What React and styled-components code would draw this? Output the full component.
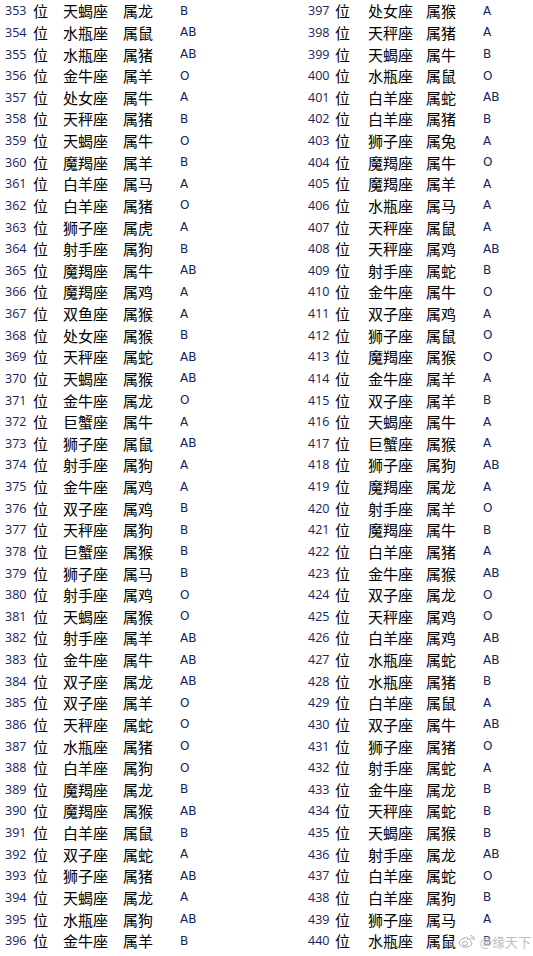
import React from "react";
import styled, { createGlobalStyle } from "styled-components";

const GlobalStyle = createGlobalStyle`
  html, body {
    margin: 0;
    padding: 0;
    background: #ffffff;
  }
`;

const LEFT = `353 天蝎座 龙 B
354 水瓶座 鼠 AB
355 水瓶座 猪 AB
356 金牛座 羊 O
357 处女座 牛 A
358 天秤座 猪 B
359 天蝎座 牛 O
360 魔羯座 羊 B
361 白羊座 马 A
362 白羊座 猪 O
363 狮子座 虎 A
364 射手座 狗 B
365 魔羯座 牛 AB
366 魔羯座 鸡 A
367 双鱼座 猴 A
368 处女座 猴 B
369 天秤座 蛇 AB
370 天蝎座 猴 AB
371 金牛座 龙 O
372 巨蟹座 牛 A
373 狮子座 鼠 AB
374 射手座 狗 A
375 金牛座 鸡 A
376 双子座 鸡 B
377 天秤座 狗 B
378 巨蟹座 猴 B
379 狮子座 马 B
380 射手座 鸡 O
381 天蝎座 猴 O
382 射手座 羊 AB
383 金牛座 牛 AB
384 双子座 龙 AB
385 双子座 羊 O
386 天秤座 蛇 O
387 水瓶座 猪 O
388 白羊座 狗 O
389 魔羯座 龙 B
390 魔羯座 猴 AB
391 白羊座 鼠 B
392 双子座 蛇 A
393 狮子座 猪 AB
394 天蝎座 龙 A
395 水瓶座 狗 AB
396 金牛座 羊 B`;

const RIGHT = `397 处女座 猴 A
398 天秤座 猪 A
399 天蝎座 牛 B
400 水瓶座 鼠 O
401 白羊座 蛇 AB
402 白羊座 猪 B
403 狮子座 兔 A
404 魔羯座 牛 O
405 魔羯座 羊 A
406 水瓶座 马 A
407 天秤座 鼠 A
408 天秤座 鸡 AB
409 射手座 蛇 B
410 金牛座 牛 O
411 双子座 鸡 A
412 狮子座 鼠 O
413 魔羯座 猴 O
414 金牛座 羊 A
415 双子座 羊 B
416 天蝎座 牛 A
417 巨蟹座 猴 A
418 狮子座 狗 AB
419 魔羯座 龙 A
420 射手座 羊 O
421 魔羯座 牛 B
422 白羊座 猪 A
423 金牛座 猴 AB
424 双子座 龙 O
425 天秤座 鸡 O
426 白羊座 鸡 AB
427 水瓶座 蛇 AB
428 水瓶座 猪 B
429 白羊座 鼠 A
430 双子座 牛 AB
431 狮子座 猪 O
432 射手座 蛇 A
433 金牛座 龙 B
434 天秤座 蛇 B
435 天蝎座 猴 B
436 射手座 龙 AB
437 白羊座 蛇 O
438 白羊座 狗 B
439 狮子座 马 A
440 水瓶座 鼠 B`;

const parse = (text) => text.split("\n").map((line) => line.split(" "));

const Page = styled.div`
  position: relative;
  width: 533px;
  height: 956px;
  display: grid;
  grid-template-columns: 302px 1fr;
  overflow: hidden;
  background: #ffffff;
`;

const Column = styled.div`
  padding-left: ${(p) => p.$pad}px;
  display: grid;
  grid-auto-rows: 21.63px;
`;

const Row = styled.div`
  display: grid;
  grid-template-columns: ${(p) => p.$cols};
  align-items: center;
  white-space: nowrap;
`;

const Num = styled.span`
  font-family: "Open Sans", "Noto Sans", sans-serif;
  font-size: 12.5px;
  color: #15245a;
`;

const Blood = styled.span`
  font-family: "DejaVu Sans", "Open Sans", sans-serif;
  font-size: 12px;
  color: #15245a;
`;

const Han = styled.span`
  font-family: "Noto Sans CJK SC", sans-serif;
  font-size: 15px;
  color: #000000;
  line-height: 1;
`;

const Watermark = styled.div`
  position: absolute;
  right: 2px;
  bottom: 5px;
  display: flex;
  align-items: center;
  gap: 4px;
  font-family: "Noto Sans CJK SC", sans-serif;
  font-size: 13px;
  color: rgba(160, 160, 160, 0.7);
  text-shadow: 0 0 3px #ffffff, 0 0 2px #ffffff;
`;

const WeiboLogo = () => (
  <svg width="18" height="15" viewBox="0 0 18 15">
    <path
      d="M7.5 3.5C4 4.5 1 7.2 1.4 9.6C1.9 12.4 6 13.8 9.6 12.9C13 12 14.6 9.9 13.4 8.4C12.8 7.7 12 7.7 12.3 6.8C12.8 5.2 11.2 4.6 9.4 5.2C9.9 3.9 9.2 2.9 7.5 3.5Z"
      fill="rgba(255,255,255,0.8)"
      stroke="rgba(140,140,140,0.8)"
      strokeWidth="1"
    />
    <ellipse cx="7" cy="9.6" rx="2.6" ry="2" fill="none" stroke="rgba(140,140,140,0.8)" strokeWidth="0.9" />
    <path d="M12.5 1.5C14.8 1.6 16.6 3.6 16.2 6" fill="none" stroke="rgba(140,140,140,0.8)" strokeWidth="1" />
    <path d="M12.6 3.5C13.8 3.6 14.5 4.6 14.3 5.6" fill="none" stroke="rgba(140,140,140,0.8)" strokeWidth="1" />
  </svg>
);

const Table = ({ rows, pad, cols }) => (
  <Column $pad={pad}>
    {rows.map(([n, sign, animal, blood]) => (
      <Row key={n} $cols={cols}>
        <Num>{n}</Num>
        <Han>位</Han>
        <Han>{sign}</Han>
        <Han>属{animal}</Han>
        <Blood>{blood}</Blood>
      </Row>
    ))}
  </Column>
);

export default function App() {
  return (
    <>
      <GlobalStyle />
      <Page>
        <Table rows={parse(LEFT)} pad={5} cols="28px 30px 60px 57px auto" />
        <Table rows={parse(RIGHT)} pad={6} cols="27px 33px 58px 57px auto" />
        <Watermark>
          <WeiboLogo />
          <span>@缘天下</span>
        </Watermark>
      </Page>
    </>
  );
}
